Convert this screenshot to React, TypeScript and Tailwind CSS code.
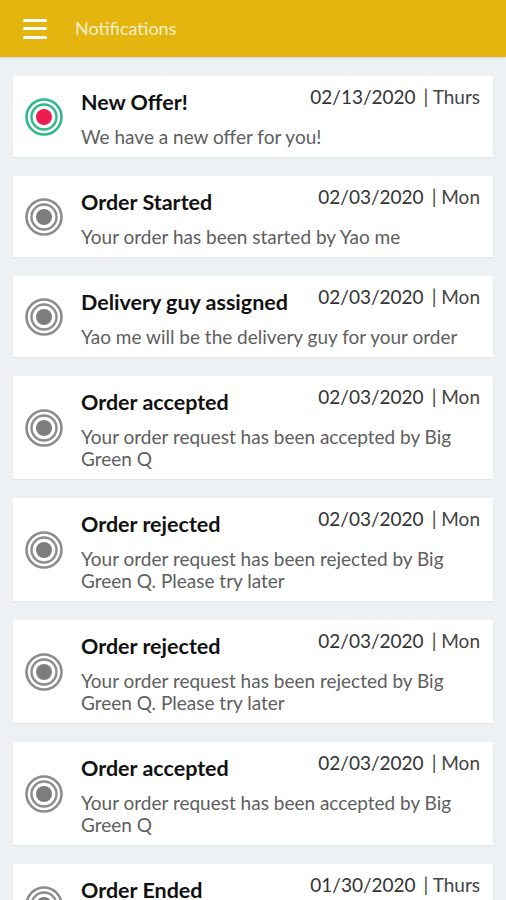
import React from "react";

interface Notification {
  title: string;
  date: string;
  day: string;
  body: string;
  isNew?: boolean;
}

const notifications: Notification[] = [
  { title: "New Offer!", date: "02/13/2020", day: "Thurs", body: "We have a new offer for you!", isNew: true },
  { title: "Order Started", date: "02/03/2020", day: "Mon", body: "Your order has been started by Yao me" },
  { title: "Delivery guy assigned", date: "02/03/2020", day: "Mon", body: "Yao me will be the delivery guy for your order" },
  { title: "Order accepted", date: "02/03/2020", day: "Mon", body: "Your order request has been accepted by Big Green Q" },
  { title: "Order rejected", date: "02/03/2020", day: "Mon", body: "Your order request has been rejected by Big Green Q. Please try later" },
  { title: "Order rejected", date: "02/03/2020", day: "Mon", body: "Your order request has been rejected by Big Green Q. Please try later" },
  { title: "Order accepted", date: "02/03/2020", day: "Mon", body: "Your order request has been accepted by Big Green Q" },
  { title: "Order Ended", date: "01/30/2020", day: "Thurs", body: "Your order has been completed" },
];

const StatusIcon: React.FC<{ active?: boolean }> = ({ active }) => {
  const ring = active ? "#2fb98a" : "#8c8c8c";
  const dot = active ? "#ec1c4f" : "#7d7d7d";
  return (
    <svg width="38" height="38" viewBox="0 0 38 38" className="shrink-0">
      <circle cx="19" cy="19" r="17.5" fill="none" stroke={ring} strokeWidth="2.6" />
      <circle cx="19" cy="19" r="12.5" fill="none" stroke={ring} strokeWidth="2.4" />
      <circle cx="19" cy="19" r="8" fill={dot} />
    </svg>
  );
};

export default function App() {
  return (
    <div className="h-[900px] overflow-hidden bg-[#eef1f4] font-['Lato','Liberation_Sans',sans-serif]">
      <header className="flex h-[57px] items-center bg-[#e4b50f] shadow-sm">
        <div className="ml-[23px] flex w-[24px] flex-col gap-[5.5px]">
          <span className="h-[3px] rounded-full bg-white" />
          <span className="h-[3px] rounded-full bg-white" />
          <span className="h-[3px] rounded-full bg-white" />
        </div>
        <h1 className="ml-[28px] text-[18px] text-[#f8efcc]">Notifications</h1>
      </header>

      <div className="flex flex-col gap-[19px] px-[13px] pt-[19px]">
        {notifications.map((n, i) => (
          <div key={i} className="flex items-center bg-white pl-[12px] pr-[13px] shadow-[0_1px_1px_rgba(0,0,0,0.04)]">
            <StatusIcon active={n.isNew} />
            <div className="ml-[18px] flex-1 pt-[8px] pb-[9px]">
              <div className="flex items-start justify-between">
                <h2 className="mt-[5px] text-[21.5px] font-bold leading-[26px] text-[#111]">{n.title}</h2>
                <p className="text-[19px] leading-[26px] text-[#333]">
                  {n.date}
                  <span className="ml-[8px] text-[#444]">| {n.day}</span>
                </p>
              </div>
              <p className="mt-[11px] text-[19px] leading-[22px] text-[#5e5e5e]">{n.body}</p>
            </div>
          </div>
        ))}
      </div>
    </div>
  );
}
